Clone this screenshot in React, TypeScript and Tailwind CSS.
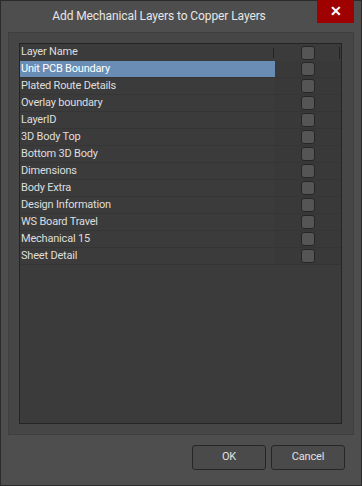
import React from "react";

const layers = [
  "Unit PCB Boundary",
  "Plated Route Details",
  "Overlay boundary",
  "LayerID",
  "3D Body Top",
  "Bottom 3D Body",
  "Dimensions",
  "Body Extra",
  "Design Information",
  "WS Board Travel",
  "Mechanical 15",
  "Sheet Detail",
];

function Check() {
  return <span className="block h-[14px] w-[14px] rounded-[3px] border border-[#262626] bg-[#555555]" />;
}

function Row({ name, selected }: { name: string; selected?: boolean }) {
  return (
    <div className="flex h-[17px] border-b border-[#353535]">
      <div
        className={`flex w-[255px] items-center pl-[1px] ${
          selected ? "bg-[#6a8db5] text-white" : "text-[#dedede]"
        }`}
      >
        {name}
      </div>
      <div className="flex flex-1 items-center bg-[#393939] pl-[26px]">
        <Check />
      </div>
    </div>
  );
}

export default function App() {
  return (
    <div
      className="flex h-[486px] w-[362px] flex-col border border-[#2b2b2b] bg-[#4e4e4e] text-[11px] tracking-[-0.2px] text-[#dedede]"
      style={{ fontFamily: "Roboto, 'Noto Sans', sans-serif" }}
    >
      <div className="flex h-[30px] items-start">
        <div className="flex h-[29px] flex-1 items-center justify-center text-[12px] tracking-[-0.1px] text-[#e6e6e6]">
          Add Mechanical Layers to Copper Layers
        </div>
        <div className="mr-[7px] mt-[-1px] flex h-[23px] w-[37px] items-center justify-center bg-[#9f0000] text-[14px] font-bold text-white">
          ✕
        </div>
      </div>

      <div className="ml-[7px] mr-[7px] mt-[1px] h-[403px] border border-[#3f3f3f] bg-[#464646] pb-[10px] pl-[10px] pr-[11px] pt-[10px]">
        <div className="flex h-full flex-col border border-[#242424] bg-[#3b3b3b]">
          <div className="flex h-[17px] items-center">
            <div className="flex w-[255px] items-center justify-between pl-[1px] text-[#dedede]">
              Layer Name
              <span className="mr-[1px] h-[10px] w-px bg-[#222222]" />
            </div>
            <div className="flex flex-1 items-center justify-between pl-[26px]">
              <Check />
              <span className="mr-[1px] h-[12px] w-px bg-[#222222]" />
            </div>
          </div>
          {layers.map((l, i) => (
            <Row key={l} name={l} selected={i === 0} />
          ))}
        </div>
      </div>

      <div className="mt-[10px] flex justify-end gap-[5px] pr-[16px]">
        <button className="h-[25px] w-[74px] rounded-[3px] border border-[#262626] bg-[#4a4a4a] text-[11px] text-[#e0e0e0]">
          OK
        </button>
        <button className="h-[25px] w-[74px] rounded-[3px] border border-[#262626] bg-[#4a4a4a] text-[11px] text-[#e0e0e0]">
          Cancel
        </button>
      </div>
    </div>
  );
}
